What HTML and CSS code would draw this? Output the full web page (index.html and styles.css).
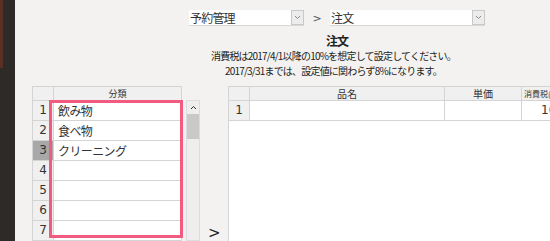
FILE: index.html
```html
<!DOCTYPE html>
<html lang="ja">
<head>
  <meta charset="UTF-8">
  <title>注文</title>
  <link rel="stylesheet" href="styles.css">
</head>
<body>
  <div class="app">
    <div class="edge"><div class="edge-top"></div></div>
    <div class="main">
      <div class="top">
        <div class="pickers">
          <div class="picker picker-a">
            <span class="picker-text">予約管理</span>
            <span class="picker-btn"><svg width="7" height="5" viewBox="0 0 7 5"><path d="M1 1 L3.5 3.5 L6 1" fill="none" stroke="#8a8a8a" stroke-width="1"/></svg></span>
          </div>
          <span class="sep">&gt;</span>
          <div class="picker picker-b">
            <span class="picker-text">注文</span>
            <span class="picker-btn"><svg width="7" height="5" viewBox="0 0 7 5"><path d="M1 1 L3.5 3.5 L6 1" fill="none" stroke="#8a8a8a" stroke-width="1"/></svg></span>
          </div>
        </div>
        <div class="notice">
          <h1>注文</h1>
          <p>消費税は2017/4/1以降の10%を想定して設定してください。</p>
          <p>2017/3/31までは、設定値に関わらず8%になります。</p>
        </div>
      </div>

      <div class="tables">
        <div class="cat-wrap">
          <table class="grid cat">
            <thead>
              <tr><th class="num"></th><th>分類</th></tr>
            </thead>
            <tbody>
              <tr><td class="num">1</td><td>飲み物</td></tr>
              <tr><td class="num">2</td><td>食べ物</td></tr>
              <tr class="current"><td class="num">3</td><td>クリーニング</td></tr>
              <tr class="after"><td class="num">4</td><td></td></tr>
              <tr><td class="num">5</td><td></td></tr>
              <tr><td class="num">6</td><td></td></tr>
              <tr><td class="num">7</td><td></td></tr>
            </tbody>
          </table>
          <div class="highlight"></div>
        </div>

        <div class="scrollbar">
          <div class="scroll-up"><svg width="7" height="5" viewBox="0 0 7 5"><path d="M1 4 L3.5 1.5 L6 4" fill="none" stroke="#333" stroke-width="1"/></svg></div>
          <div class="scroll-thumb"></div>
        </div>

        <div class="move">&gt;</div>

        <div class="order-wrap">
          <table class="grid order">
            <thead>
              <tr><th class="num"></th><th class="c-name">品名</th><th class="c-price">単価</th><th class="c-tax">消費税(%)</th></tr>
            </thead>
            <tbody>
              <tr><td class="num">1</td><td></td><td></td><td class="right">10</td></tr>
            </tbody>
          </table>
        </div>
      </div>
    </div>
  </div>
</body>
</html>
```

FILE: styles.css
```css
body {
  margin: 0;
  background: #f3f2f0;
  font-family: "Noto Sans CJK JP", "DejaVu Sans", sans-serif;
  color: #222;
  overflow: hidden;
}
.app {
  display: flex;
  height: 241px;
  width: 550px;
  overflow: hidden;
}
.edge {
  width: 15px;
  flex: none;
  background: #2e2a28;
}
.edge-top {
  width: 3px;
  height: 68px;
  background: #5a2f24;
}
.main {
  flex: 1;
  min-width: 0;
}

/* top area */
.top {
  padding-left: 174px;
  width: 296px;
}
.pickers {
  display: flex;
  align-items: center;
  margin-top: 10px;
  height: 16px;
}
.picker {
  display: flex;
  height: 16px;
  box-sizing: border-box;
  background: #fff;
  border-bottom: 1px solid #d8d8d8;
}
.picker-a { width: 115px; }
.picker-b { width: 155px; }
.picker-text {
  flex: 1;
  font-size: 12px;
  line-height: 15px;
  letter-spacing: -0.8px;
  padding-left: 1px;
  color: #333;
}
.picker-btn {
  width: 11px;
  background: #ececec;
  border: 1px solid #c9c9c9;
  display: flex;
  align-items: center;
  justify-content: center;
}
.sep {
  width: 26px;
  text-align: center;
  font-family: "DejaVu Sans", sans-serif;
  font-size: 11px;
  color: #555;
}
.notice {
  text-align: center;
  margin-top: 8px;
}
.notice h1 {
  margin: 0;
  font-size: 12px;
  line-height: 14px;
  font-weight: bold;
  letter-spacing: -1px;
}
.notice p {
  margin: 0;
  font-size: 10px;
  line-height: 15px;
  letter-spacing: -0.8px;
  padding-right: 7px;
  color: #222;
}

/* tables */
.tables {
  display: flex;
  margin-top: 8px;
  padding-left: 17px;
  height: 155px;
}
.grid {
  border-collapse: collapse;
  table-layout: fixed;
}
.grid th, .grid td {
  border: 1px solid #d4d4d4;
  padding: 0;
  overflow: hidden;
  white-space: nowrap;
}
.grid th {
  height: 13px;
  background: #f0f0f0;
  font-size: 9px;
  font-weight: normal;
  line-height: 13px;
  color: #333;
}
.grid td {
  height: 19px;
  background: #fff;
  font-size: 12px;
  line-height: 19px;
  color: #333;
}
.grid td.num {
  background: #f0f0f0;
  text-align: center;
  font-family: "DejaVu Sans", sans-serif;
  font-size: 12px;
}
.cat-wrap {
  position: relative;
  flex: none;
}
.cat {
  width: 150px;
}
.cat .num { width: 20px; }
.cat td {
  padding-left: 4px;
  letter-spacing: -0.6px;
}
.cat td.num { padding-left: 0; letter-spacing: 0; }
.cat tr.current td.num {
  background: #a8a8a8;
}
.cat tr.current td + td,
.cat tr.after td + td {
  border-top: 1px solid #f9c08a;
}
.highlight {
  position: absolute;
  left: 17px;
  top: 14px;
  width: 134px;
  height: 138px;
  box-sizing: border-box;
  border: 3px solid #f25a80;
}
.scrollbar {
  flex: none;
  margin-left: 4px;
  margin-top: 14px;
  width: 14px;
  box-sizing: border-box;
  background: #eeeeee;
  border: 1px solid #dcdcdc;
}
.scroll-up {
  height: 13px;
  display: flex;
  align-items: center;
  justify-content: center;
}
.scroll-thumb {
  height: 25px;
  background: #c9c9c9;
}
.move {
  flex: none;
  width: 28px;
  align-self: flex-end;
  padding-left: 8px;
  margin-bottom: 1px;
  box-sizing: border-box;
  font-family: "DejaVu Sans", sans-serif;
  font-size: 15px;
  line-height: 14px;
  color: #222;
}
.order-wrap {
  flex: none;
  width: 340px;
  background: #fff;
  border-left: 1px solid #d4d4d4;
  box-sizing: border-box;
}
.order {
  width: 340px;
  margin-left: -1px;
}
.order .num { width: 20px; }
.order .c-name { width: 194px; font-size: 10px; }
.order .c-price { width: 76px; font-size: 10px; }
.order .c-tax { text-align: left; padding-left: 2px; font-size: 8px; }
.order td.right {
  text-align: left;
  padding-left: 19px;
  font-family: "DejaVu Sans", sans-serif;
  font-size: 12px;
}
```
